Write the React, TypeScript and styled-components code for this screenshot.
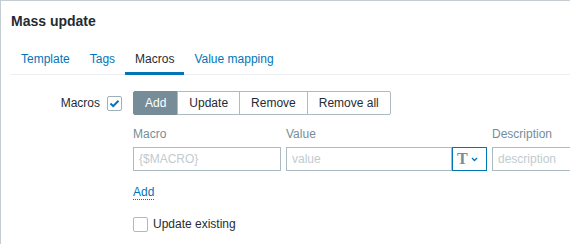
import React from 'react';
import styled, { createGlobalStyle } from 'styled-components';

const GlobalStyle = createGlobalStyle`
  html, body {
    margin: 0;
    padding: 0;
    background: #ffffff;
    overflow: hidden;
  }
  body {
    font-family: 'Liberation Sans', Arial, sans-serif;
    font-size: 12px;
    color: #1f2c33;
  }
`;

const Dialog = styled.div`
  width: 100%;
  height: 244px;
  box-sizing: border-box;
  border-top: 1px solid #c5cdd2;
  border-left: 1px solid #c5cdd2;
  background: #ffffff;
  overflow: hidden;
`;

const Header = styled.div`
  padding: 12px 10px 15px;
`;

const Title = styled.h4`
  margin: 0;
  font-size: 14px;
  line-height: 17px;
  font-weight: bold;
  color: #1f2c33;
`;

const Body = styled.div`
  padding-left: 10px;
`;

const TabBar = styled.div`
  display: flex;
  border-bottom: 1px solid #ebeef0;
`;

const Tab = styled.a<{ $active?: boolean }>`
  display: block;
  padding: 7px 10px 6px;
  margin-bottom: -1px;
  line-height: 14px;
  font-size: 12px;
  color: ${(p) => (p.$active ? '#1f2c33' : '#0275b8')};
  border-bottom: 3px solid ${(p) => (p.$active ? '#0275b8' : 'transparent')};
  text-decoration: none;
  cursor: pointer;
`;

const FormGrid = styled.div`
  display: grid;
  grid-template-columns: 111px 1fr;
  column-gap: 11px;
  row-gap: 12px;
  padding-top: 16px;
`;

const Label = styled.div`
  display: flex;
  align-items: center;
  justify-content: flex-end;
  gap: 7px;
  height: 24px;
  line-height: 14px;
`;

const Field = styled.div`
  display: flex;
  align-items: center;
  min-height: 24px;
  min-width: 0;
`;

const Check = styled.span<{ $checked?: boolean }>`
  display: inline-flex;
  align-items: center;
  justify-content: center;
  width: 15px;
  height: 15px;
  box-sizing: border-box;
  border: 1px solid ${(p) => (p.$checked ? '#9fb0b9' : '#acbbc2')};
  border-radius: 2px;
  background: #ffffff;
  flex-shrink: 0;
`;

const SegGroup = styled.div`
  display: flex;
`;

const SegButton = styled.button<{ $active?: boolean }>`
  height: 24px;
  padding: 0 11px;
  margin: 0 0 0 -1px;
  font-family: 'Liberation Sans', Arial, sans-serif;
  font-size: 12px;
  line-height: 22px;
  border: 1px solid ${(p) => (p.$active ? '#768d99' : '#acbbc2')};
  background: ${(p) => (p.$active ? '#768d99' : '#ffffff')};
  color: ${(p) => (p.$active ? '#ffffff' : '#1f2c33')};
  &:first-child {
    margin-left: 0;
    border-radius: 2px 0 0 2px;
  }
  &:last-child {
    border-radius: 0 2px 2px 0;
  }
`;

const MacroTable = styled.div`
  display: grid;
  grid-template-columns: 148px 201px 84px;
  column-gap: 5px;
  row-gap: 6px;
`;

const ColHead = styled.div`
  color: #768d99;
  line-height: 14px;
  white-space: nowrap;
`;

const Input = styled.input<{ $w?: number }>`
  box-sizing: border-box;
  width: ${(p) => (p.$w ? `${p.$w}px` : '100%')};
  height: 24px;
  padding: 0 5px;
  border: 1px solid #acbbc2;
  border-radius: 0;
  font-family: 'Liberation Sans', Arial, sans-serif;
  font-size: 12px;
  color: #1f2c33;
  background: #ffffff;
  outline: none;
  &::placeholder {
    color: #c2cbd0;
  }
`;

const ValueCell = styled.div`
  display: flex;
`;

const TypeButton = styled.button`
  box-sizing: border-box;
  width: 35px;
  height: 24px;
  padding: 0 0 0 4px;
  border: 1px solid #0275b8;
  background: #ffffff;
  display: flex;
  align-items: center;
  gap: 3px;
`;

const TypeGlyph = styled.span`
  font-family: 'Liberation Serif', 'Times New Roman', serif;
  font-weight: bold;
  font-size: 16px;
  line-height: 16px;
  color: #768d99;
`;

const AddLink = styled.a`
  grid-column: 1 / 2;
  justify-self: start;
  margin-top: 8px;
  line-height: 14px;
  color: #0275b8;
  border-bottom: 1px dotted #0275b8;
  text-decoration: none;
  cursor: pointer;
`;

const CheckLabel = styled.label`
  display: flex;
  align-items: center;
  gap: 5px;
  line-height: 14px;
  height: 24px;
`;

const Tick = () => (
  <svg width="11" height="9" viewBox="0 0 11 9">
    <path d="M1.5 4.5 L4.2 7.2 L9.5 1.8" fill="none" stroke="#0275b8" strokeWidth="2" />
  </svg>
);

const Chevron = () => (
  <svg width="7" height="5" viewBox="0 0 7 5">
    <path d="M1 1 L3.5 3.5 L6 1" fill="none" stroke="#0275b8" strokeWidth="1.3" />
  </svg>
);

const App: React.FC = () => {
  return (
    <>
      <GlobalStyle />
      <Dialog>
        <Header>
          <Title>Mass update</Title>
        </Header>
        <Body>
          <TabBar>
            <Tab>Template</Tab>
            <Tab>Tags</Tab>
            <Tab $active>Macros</Tab>
            <Tab>Value mapping</Tab>
          </TabBar>

          <FormGrid>
            <Label>
              Macros
              <Check $checked>
                <Tick />
              </Check>
            </Label>
            <Field>
              <SegGroup>
                <SegButton $active>Add</SegButton>
                <SegButton>Update</SegButton>
                <SegButton>Remove</SegButton>
                <SegButton>Remove all</SegButton>
              </SegGroup>
            </Field>

            <div />
            <Field>
              <MacroTable>
                <ColHead>Macro</ColHead>
                <ColHead>Value</ColHead>
                <ColHead>Description</ColHead>
                <Input placeholder="{$MACRO}" />
                <ValueCell>
                  <Input $w={166} placeholder="value" />
                  <TypeButton>
                    <TypeGlyph>T</TypeGlyph>
                    <Chevron />
                  </TypeButton>
                </ValueCell>
                <Input placeholder="description" />
                <AddLink>Add</AddLink>
              </MacroTable>
            </Field>

            <div />
            <Field>
              <CheckLabel>
                <Check />
                Update existing
              </CheckLabel>
            </Field>
          </FormGrid>
        </Body>
      </Dialog>
    </>
  );
};

export default App;
